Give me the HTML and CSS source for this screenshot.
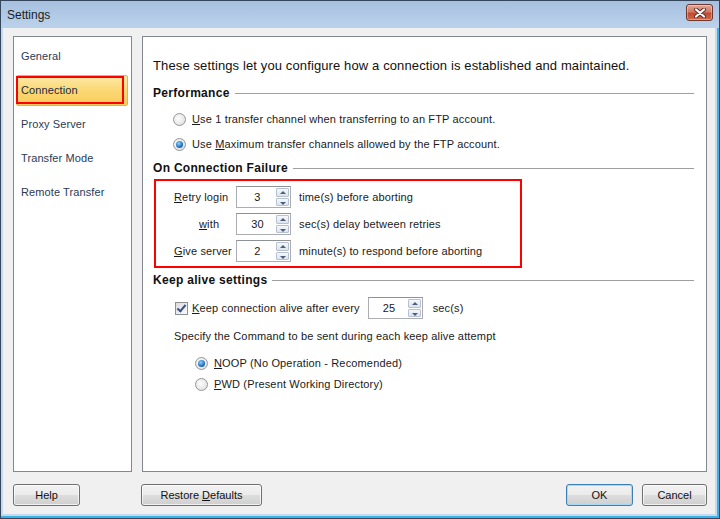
FILE: index.html
```html
<!DOCTYPE html>
<html lang="en">
<head>
    <meta charset="UTF-8">
    <title>Settings</title>
    <link rel="stylesheet" href="styles.css">
</head>
<body>
    <div class="window">
        <div class="titlebar">
            <span class="title">Settings</span>
            <a class="close" href="#">
                <svg width="14" height="10" viewBox="0 0 14 10">
                    <path d="M3 1.5 L11 8.5 M11 1.5 L3 8.5" stroke="#5a2a24" stroke-width="4" stroke-linecap="round"/>
                    <path d="M3 1.5 L11 8.5 M11 1.5 L3 8.5" stroke="#fff" stroke-width="2.2" stroke-linecap="round"/>
                </svg>
            </a>
        </div>

        <div class="client">
            <div class="panes">
                <ul class="nav">
                    <li>General</li>
                    <li class="active">Connection</li>
                    <li>Proxy Server</li>
                    <li>Transfer Mode</li>
                    <li>Remote Transfer</li>
                </ul>

                <div class="main">
                    <p class="intro">These settings let you configure how a connection is established and maintained.</p>

                    <div class="group-head g-perf"><span>Performance</span></div>
                    <label class="opt opt-first"><i class="radio"></i><span><u>U</u>se 1 transfer channel when transferring to an FTP account.</span></label>
                    <label class="opt"><i class="radio on"></i><span>Use <u>M</u>aximum transfer channels allowed by the FTP account.</span></label>

                    <div class="group-head g-fail"><span>On Connection Failure</span></div>
                    <div class="retry">
                        <div class="row">
                            <span class="lbl"><u>R</u>etry login</span>
                            <span class="spin"><span class="val">3</span><span class="arrows"><b class="up"></b><b class="dn"></b></span></span>
                            <span class="after">time(s) before aborting</span>
                        </div>
                        <div class="row">
                            <span class="lbl lbl-with"><u>w</u>ith</span>
                            <span class="spin"><span class="val">30</span><span class="arrows"><b class="up"></b><b class="dn"></b></span></span>
                            <span class="after">sec(s) delay between retries</span>
                        </div>
                        <div class="row">
                            <span class="lbl"><u>G</u>ive server</span>
                            <span class="spin"><span class="val">2</span><span class="arrows"><b class="up"></b><b class="dn"></b></span></span>
                            <span class="after">minute(s) to respond before aborting</span>
                        </div>
                    </div>

                    <div class="group-head g-keep"><span>Keep alive settings</span></div>
                    <div class="keep-row">
                        <i class="check"></i>
                        <span><u>K</u>eep connection alive after every</span>
                        <span class="spin"><span class="val">25</span><span class="arrows"><b class="up"></b><b class="dn"></b></span></span>
                        <span class="unit">sec(s)</span>
                    </div>
                    <p class="specify">Specify the Command to be sent during each keep alive attempt</p>
                    <label class="opt opt-cmd opt-noop"><i class="radio on"></i><span><u>N</u>OOP (No Operation - Recomended)</span></label>
                    <label class="opt opt-cmd opt-pwd"><i class="radio"></i><span><u>P</u>WD (Present Working Directory)</span></label>
                </div>
            </div>

            <div class="buttons">
                <a class="btn btn-help" href="#">Help</a>
                <a class="btn btn-restore" href="#"><span>Restore <u>D</u>efaults</span></a>
                <span class="spacer"></span>
                <a class="btn btn-ok" href="#">OK</a>
                <a class="btn btn-cancel" href="#">Cancel</a>
            </div>
        </div>
    </div>
</body>
</html>
```

FILE: styles.css
```css
html, body {
    margin: 0;
    padding: 0;
}

body {
    font-family: "Liberation Sans", Arial, sans-serif;
    font-size: 11px;
    color: #1a1a1a;
}

ul, li, p {
    margin: 0;
    padding: 0;
}

ul {
    list-style: none;
}

a {
    color: inherit;
    text-decoration: none;
}

.window {
    width: 720px;
    height: 519px;
    box-sizing: border-box;
    display: flex;
    flex-direction: column;
    border: 1px solid #34465c;
    background: #c6d9ee;
    box-shadow: inset -2px -2px 0 #3ab2e6;
}

.titlebar {
    height: 27px;
    display: flex;
    align-items: center;
    padding: 0 6px 0 6px;
    background: linear-gradient(#a6c0df, #bcd2ec);
}

.title {
    flex: 1;
    font-size: 12px;
    color: #1c1c1c;
    padding-top: 1px;
}

.close {
    width: 25px;
    height: 15px;
    margin-top: -4px;
    border: 1px solid #6e3830;
    border-radius: 3px;
    background: linear-gradient(#e4a696 0%, #d27a64 45%, #c04a30 55%, #cf6a4c 100%);
    box-shadow: inset 0 0 0 1px rgba(255, 255, 255, 0.35);
    display: flex;
    align-items: center;
    justify-content: center;
}

.client {
    flex: 1;
    margin: 0 4px 4px 2px;
    background: #f0f0f0;
    padding: 8px 8px 0 10px;
    display: flex;
    flex-direction: column;
}

.panes {
    height: 436px;
    display: flex;
    gap: 10px;
}

.nav {
    width: 119px;
    box-sizing: border-box;
    border: 1px solid #828790;
    background: #fff;
    padding: 4px 3px 0 2px;
    color: #2b3a55;
    letter-spacing: 0.1px;
}

.nav li {
    height: 31px;
    line-height: 31px;
    padding-left: 5px;
    margin-bottom: 3px;
    box-sizing: border-box;
    position: relative;
}

.nav li.active {
    color: #1b2740;
    background: linear-gradient(#fde9a8, #fcd874 50%, #f9cc5c);
    border: 1px solid #e3b34a;
    border-radius: 2px;
    line-height: 29px;
    padding-left: 4px;
}

/* annotation box round the selected page */
.nav li.active::after {
    content: "";
    position: absolute;
    top: 0;
    left: -1px;
    right: 3px;
    bottom: 1px;
    border: 2px solid #f00;
}

.main {
    flex: 1;
    box-sizing: border-box;
    border: 1px solid #828790;
    background: #fff;
    padding: 21px 12px 0 10px;
    letter-spacing: 0.15px;
}

.intro {
    font-size: 13px;
    line-height: 16px;
    letter-spacing: 0.12px;
    color: #111;
}

.group-head {
    height: 16px;
    display: flex;
    align-items: center;
    gap: 5px;
    font-size: 12px;
    font-weight: bold;
    letter-spacing: 0.3px;
    color: #111;
}

.group-head::after {
    content: "";
    flex: 1;
    height: 1px;
    background: #a0a0a0;
}

.g-perf { margin-top: 11px; }
.g-fail { margin-top: 6px; }
.g-keep { margin-top: 4px; }

.opt {
    display: flex;
    align-items: center;
    height: 20px;
    padding-left: 20px;
    margin-top: 5px;
    color: #1a1a1a;
}

.opt-first { margin-top: 8px; }

.radio {
    width: 13px;
    height: 13px;
    box-sizing: border-box;
    border-radius: 50%;
    border: 1px solid #949697;
    background: radial-gradient(circle at 40% 40%, #fdfdfd, #d9dadb);
    margin-right: 6px;
    position: relative;
}

.radio.on::after {
    content: "";
    position: absolute;
    left: 2px;
    top: 2px;
    width: 7px;
    height: 7px;
    border-radius: 50%;
    background: radial-gradient(circle at 40% 35%, #8fd3fb, #1f6fc0 60%, #124d8f);
}

.retry {
    width: 368px;
    box-sizing: border-box;
    margin: 3px 0 0 1px;
    border: 2px solid #f00;
    padding: 5px 0 4px 18px;
}

.row {
    height: 22px;
    display: flex;
    align-items: center;
    margin-top: 5px;
}

.row:first-child {
    margin-top: 0;
}

.lbl {
    width: 62px;
}

.lbl-with {
    box-sizing: border-box;
    padding-left: 25px;
}

.spin {
    width: 55px;
    height: 22px;
    box-sizing: border-box;
    border: 1px solid #abadb3;
    border-top-color: #8e9196;
    background: #fff;
    display: flex;
    align-items: center;
}

.val {
    flex: 1;
    text-align: center;
    padding-left: 2px;
}

.arrows {
    width: 13px;
    height: 18px;
    margin-right: 1px;
    display: flex;
    flex-direction: column;
    gap: 1px;
}

.arrows b {
    flex: 1;
    border: 1px solid #b6c2d1;
    border-radius: 1px;
    background: linear-gradient(#f6f8fa, #dde4ec);
    position: relative;
}

.arrows b::after {
    content: "";
    position: absolute;
    left: 3px;
    width: 0;
    height: 0;
    border-left: 3px solid transparent;
    border-right: 3px solid transparent;
}

.arrows .up::after {
    top: 2px;
    border-bottom: 3px solid #4c5e80;
}

.arrows .dn::after {
    top: 3px;
    border-top: 3px solid #4c5e80;
}

.after {
    margin-left: 8px;
}

.keep-row {
    height: 22px;
    display: flex;
    align-items: center;
    margin-top: 9px;
    padding-left: 22px;
}

.check {
    width: 13px;
    height: 13px;
    box-sizing: border-box;
    border: 1px solid #8e8f8f;
    background: linear-gradient(135deg, #dcdcdc, #fbfbfb);
    margin-right: 4px;
    position: relative;
}

.check::after {
    content: "";
    position: absolute;
    left: 3px;
    top: 0;
    width: 3px;
    height: 7px;
    border: solid #3b4f8e;
    border-width: 0 2px 2px 0;
    transform: rotate(40deg);
}

.keep-row .spin {
    margin-left: 8px;
}

.unit {
    margin-left: 10px;
}

.specify {
    margin-top: 9px;
    line-height: 16px;
    padding-left: 21px;
}

.opt-cmd {
    padding-left: 42px;
}

.opt-noop { margin-top: 9px; }
.opt-pwd { margin-top: 1px; }

.buttons {
    display: flex;
    margin-top: 12px;
    gap: 9px;
}

.btn {
    height: 22px;
    box-sizing: border-box;
    border: 1px solid #707070;
    border-radius: 3px;
    background: linear-gradient(#f2f2f2 0%, #ebebeb 50%, #dddddd 51%, #cfcfcf 100%);
    box-shadow: inset 0 0 0 1px rgba(255, 255, 255, 0.7);
    display: flex;
    align-items: center;
    justify-content: center;
    color: #111;
}

.btn-help { width: 67px; }
.btn-restore { width: 121px; margin-left: 52px; }
.btn-ok { width: 67px; border-color: #3c7fb1; box-shadow: inset 0 0 0 1px #a7d8f5; }
.btn-cancel { width: 65px; }

.spacer {
    flex: 1;
}
```
